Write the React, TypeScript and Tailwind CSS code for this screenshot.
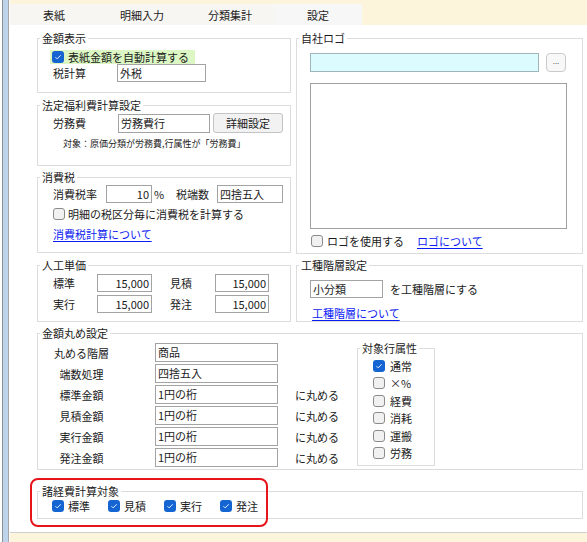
import React from "react";

const tabs = ["表紙", "明細入力", "分類集計", "設定"];

function Check({ on }: { on?: boolean }) {
  if (on) {
    return (
      <span className="w-[12px] h-[12px] rounded-[3px] bg-[#1464d2] flex items-center justify-center shrink-0">
        <svg width="8" height="8" viewBox="0 0 8 8">
          <path d="M1.4 4.1 L3.2 5.9 L6.7 2.2" fill="none" stroke="#dbe8ff" strokeWidth="1" />
        </svg>
      </span>
    );
  }
  return <span className="w-[12px] h-[12px] rounded-[3px] border border-[#8a8a8a] bg-[#f1f1f1] shrink-0" />;
}

function Group({ title, className, children }: { title: string; className: string; children?: React.ReactNode }) {
  return (
    <fieldset className={"border border-[#dcdcdc] min-w-0 " + className}>
      <legend className="ml-[2px] px-[2px] leading-[14px]">{title}</legend>
      {children}
    </fieldset>
  );
}

function Box({ v, className, right }: { v?: string; className: string; right?: boolean }) {
  return (
    <div
      className={
        "border border-[#a3a3a3] bg-white px-[2px] flex items-center leading-none shrink-0 " +
        (right ? "justify-end " : "") +
        className
      }
    >
      {v}
    </div>
  );
}

function Link({ children }: { children: React.ReactNode }) {
  return <span className="text-[#0c1cf2] underline underline-offset-[2px]">{children}</span>;
}

const roundRows = [
  { label: "丸める階層", v: "商品", tail: false },
  { label: "端数処理", v: "四捨五入", tail: false },
  { label: "標準金額", v: "1円の桁", tail: true },
  { label: "見積金額", v: "1円の桁", tail: true },
  { label: "実行金額", v: "1円の桁", tail: true },
  { label: "発注金額", v: "1円の桁", tail: true },
];

const attrs = [
  { t: "通常", on: true },
  { t: "×%", on: false },
  { t: "経費", on: false },
  { t: "消耗", on: false },
  { t: "運搬", on: false },
  { t: "労務", on: false },
];

export default function App() {
  return (
    <div className="w-[587px] h-[542px] flex bg-white overflow-hidden text-[11px] leading-[14px] text-[#1b1b1b] font-['Noto_Sans_CJK_JP','Noto_Sans',sans-serif]">
      {/* window edge */}
      <div className="w-[10px] h-full flex shrink-0">
        <div className="w-[2px] bg-white" />
        <div className="w-[1px] bg-[#8e8e8e]" />
        <div className="w-[5px] bg-[#bdd4ec]" />
        <div className="w-[1px] bg-[#a5a5a5]" />
        <div className="w-[1px] bg-white" />
      </div>

      <div className="flex-1 flex flex-col">
        <div className="h-[4px] bg-[#fcf5dc]" />
        <div className="h-[21px] flex bg-[#fcf5dc]">
          {tabs.map((t, i) => (
            <div
              key={t}
              className={
                "w-[88px] flex items-center justify-center " + (i === 3 ? "bg-[#f7f7f7]" : "bg-[#f7f6f2]")
              }
            >
              {t}
            </div>
          ))}
        </div>

        <div className="flex-1 pl-[27px] pt-[6px]">
          <div className="flex gap-[5px]">
            {/* left column */}
            <div className="w-[254px] flex flex-col">
              <Group title="金額表示" className="h-[62px]">
                <div className="mt-[5px] ml-[12px] w-[145px] h-[14px] bg-[#dcf7c4] flex items-center pl-[2px] gap-[4px]">
                  <Check on />
                  表紙金額を自動計算する
                </div>
                <div className="flex items-center">
                  <span className="ml-[15px] w-[64px]">税計算</span>
                  <Box v="外税" className="w-[89px] h-[18px]" />
                </div>
              </Group>

              <Group title="法定福利費計算設定" className="mt-[5px] h-[68px]">
                <div className="mt-[1px] flex items-center">
                  <span className="ml-[15px] w-[65px]">労務費</span>
                  <Box v="労務費行" className="w-[92px] h-[19px]" />
                  <div className="ml-[3px] w-[70px] h-[20px] border border-[#c3c3c3] rounded-[3px] bg-[#f2f2f2] flex items-center justify-center">
                    詳細設定
                  </div>
                </div>
                <div className="mt-[5px] ml-[25px] text-[9px] leading-[12px]">
                  対象：原価分類が労務費,行属性が「労務費」
                </div>
              </Group>

              <Group title="消費税" className="mt-[4px] h-[83px]">
                <div className="mt-[1px] flex items-center">
                  <span className="ml-[15px] w-[53px]">消費税率</span>
                  <Box v="10" right className="w-[46px] h-[18px]" />
                  <span className="w-[24px] pl-[2px]">%</span>
                  <span className="w-[41px]">税端数</span>
                  <Box v="四捨五入" className="w-[66px] h-[18px]" />
                </div>
                <div className="mt-[4px] ml-[15px] h-[14px] flex items-center gap-[3px]">
                  <Check />
                  明細の税区分毎に消費税を計算する
                </div>
                <div className="mt-[6px] ml-[15px]">
                  <Link>消費税計算について</Link>
                </div>
              </Group>

              <Group title="人工単価" className="mt-[5px] h-[64px]">
                <div className="mt-[2px] flex items-center">
                  <span className="ml-[15px] w-[44px]">標準</span>
                  <Box v="15,000" right className="w-[55px] h-[18px]" />
                  <span className="ml-[18px] w-[45px]">見積</span>
                  <Box v="15,000" right className="w-[54px] h-[18px]" />
                </div>
                <div className="mt-[3px] flex items-center">
                  <span className="ml-[15px] w-[44px]">実行</span>
                  <Box v="15,000" right className="w-[55px] h-[18px]" />
                  <span className="ml-[18px] w-[45px]">発注</span>
                  <Box v="15,000" right className="w-[54px] h-[18px]" />
                </div>
              </Group>
            </div>

            {/* right column */}
            <div className="w-[287px] flex flex-col">
              <Group title="自社ロゴ" className="h-[223px]">
                <div className="mt-[8px] ml-[13px] flex items-center">
                  <div className="w-[229px] h-[19px] border border-[#9fb5b9] bg-[#dcfbff]" />
                  <div className="ml-[7px] w-[20px] h-[19px] border border-[#cacaca] rounded-[4px] bg-[#f8f8f8] flex items-center justify-center text-[8px] text-[#666] leading-none pb-[3px]">
                    ...
                  </div>
                </div>
                <div className="mt-[11px] ml-[13px] w-[257px] h-[146px] border border-[#a0a0a0] bg-white" />
                <div className="mt-[5px] ml-[14px] h-[14px] flex items-center">
                  <Check />
                  <span className="ml-[4px] w-[90px]">ロゴを使用する</span>
                  <Link>ロゴについて</Link>
                </div>
              </Group>

              <Group title="工種階層設定" className="mt-[4px] h-[64px]">
                <div className="mt-[8px] ml-[13px] flex items-center">
                  <Box v="小分類" className="w-[73px] h-[18px]" />
                  <span className="ml-[7px]">を工種階層にする</span>
                </div>
                <div className="mt-[8px] ml-[15px]">
                  <Link>工種階層について</Link>
                </div>
              </Group>
            </div>
          </div>

          <Group title="金額丸め設定" className="mt-[4px] w-[546px] h-[144px]">
            <div className="flex">
              <div className="w-[319px] pl-[15px] pt-[3px] flex flex-col gap-[2px]">
                {roundRows.map((r) => (
                  <div key={r.label} className="flex items-center h-[19px]">
                    <span className="w-[57px] text-center">{r.label}</span>
                    <Box v={r.v} className="ml-[45px] w-[123px] h-[19px]" />
                    {r.tail && <span className="ml-[17px]">に丸める</span>}
                  </div>
                ))}
              </div>
              <Group title="対象行属性" className="mt-[1px] w-[78px] h-[125px]">
                <div className="mt-[2px] flex flex-col">
                  {attrs.map((a) => (
                    <div key={a.t} className="h-[17.5px] ml-[15px] flex items-center gap-[5px]">
                      <Check on={a.on} />
                      {a.t}
                    </div>
                  ))}
                </div>
              </Group>
            </div>
          </Group>

          <div className="relative mt-[14px] w-[546px]">
            <Group title="諸経費計算対象" className="h-[35px]">
              <div className="mt-[1px] ml-[14px] h-[14px] flex">
                {["標準", "見積", "実行", "発注"].map((t) => (
                  <div key={t} className="w-[56px] flex items-center gap-[4px]">
                    <Check on />
                    {t}
                  </div>
                ))}
              </div>
            </Group>
            <div className="absolute left-[-7px] top-[-6px] w-[238px] h-[49px] border-2 border-[#e8141c] rounded-[8px]" />
          </div>
        </div>

        <div className="h-[10px] border-t border-[#cfcfcf] bg-[#fcf5dc]" />
      </div>
    </div>
  );
}
